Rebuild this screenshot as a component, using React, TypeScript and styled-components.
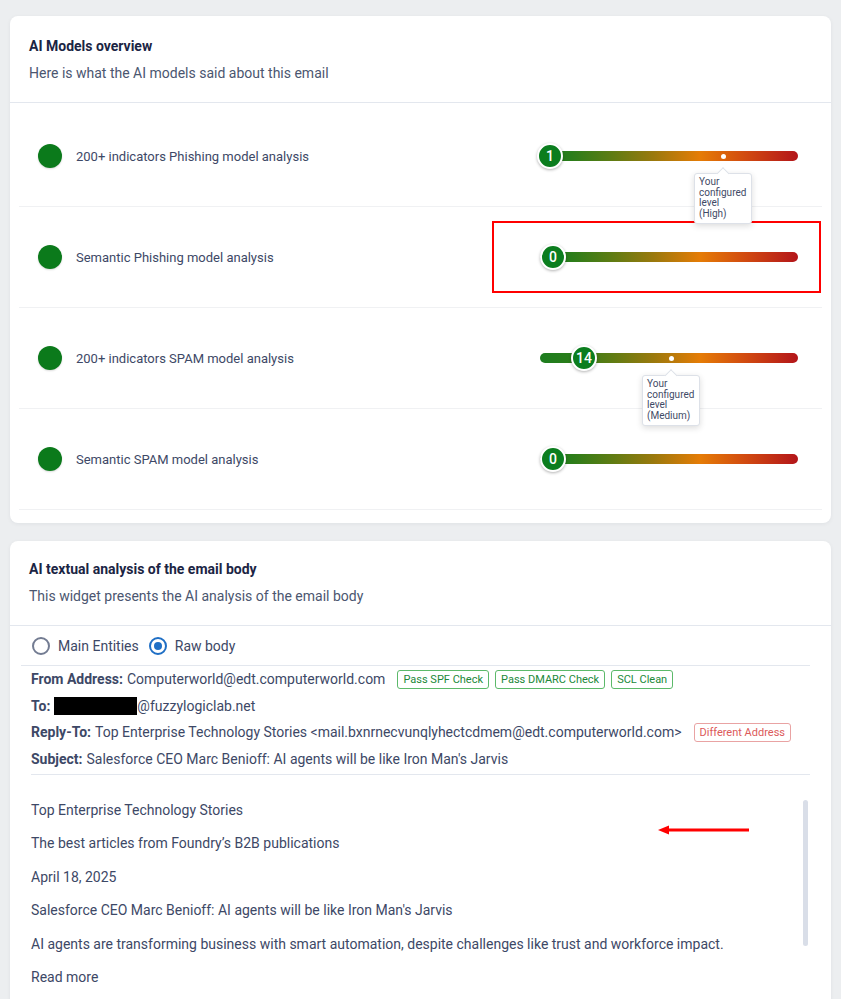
import React from "react";
import styled, { createGlobalStyle } from "styled-components";

const GlobalStyle = createGlobalStyle`
  html, body { margin: 0; padding: 0; }
  body {
    background: #eceef0;
    font-family: Roboto, "Liberation Sans", Arial, sans-serif;
    -webkit-font-smoothing: antialiased;
  }
`;

const Page = styled.div`
  padding: 16px 10px 0;
  display: flex;
  flex-direction: column;
  gap: 18px;
`;

const Card = styled.section`
  background: #ffffff;
  border-radius: 8px;
  box-shadow: 0 1px 4px rgba(20, 30, 50, 0.06);
`;

const CardHeader = styled.header<{ $padTop?: number }>`
  padding: ${(p) => p.$padTop ?? 20}px 19px 19px;
  border-bottom: 1px solid #e3e7ee;
`;

const Title = styled.h2`
  margin: 0;
  font-size: 14px;
  font-weight: 700;
  line-height: 20px;
  color: #1b2544;
`;

const Subtitle = styled.p`
  margin: 7px 0 0;
  font-size: 14px;
  line-height: 20px;
  color: #4b5670;
`;

const ModelList = styled.div`
  padding: 3px 9px 13px;
`;

const ModelRow = styled.div`
  position: relative;
  height: 100px;
  display: flex;
  align-items: center;
  padding: 0 24px 0 19px;
  border-bottom: 1px solid #f0f1f3;
`;

const StatusDot = styled.span`
  flex: none;
  width: 24px;
  height: 24px;
  border-radius: 50%;
  background: #0b7a1b;
  box-shadow: 0 1px 2px rgba(0, 0, 0, 0.15);
`;

const ModelName = styled.span`
  flex: 1;
  margin-left: 14px;
  font-size: 13px;
  color: #3d4866;
`;

const Track = styled.div`
  position: relative;
  flex: none;
  width: 258px;
  height: 10px;
  border-radius: 5px;
  background: linear-gradient(
    to right,
    #1d7d1f 0%,
    #2a7d1a 12%,
    #5f7c13 28%,
    #9a790d 44%,
    #e57c06 62%,
    #d24c10 79%,
    #b3151a 100%
  );
`;

const Thumb = styled.span`
  position: absolute;
  top: 50%;
  width: 26px;
  height: 26px;
  transform: translate(-50%, -50%);
  border-radius: 50%;
  background: #0b7d1e;
  border: 2px solid #ffffff;
  box-sizing: border-box;
  box-shadow: 0 1px 3px rgba(0, 0, 0, 0.3);
  display: flex;
  align-items: center;
  justify-content: center;
  color: #ffffff;
  font-size: 14px;
  font-weight: 500;
  z-index: 1;
`;

const LevelMarker = styled.span`
  position: absolute;
  top: 50%;
  width: 0;
  height: 0;
`;

const LevelDot = styled.span`
  position: absolute;
  left: -2.5px;
  top: -2.5px;
  width: 5px;
  height: 5px;
  border-radius: 50%;
  background: #ffffff;
`;

const Tooltip = styled.div`
  position: absolute;
  top: 17px;
  left: -29px;
  width: 58px;
  box-sizing: border-box;
  padding: 3px 4px 3px;
  background: #ffffff;
  border: 1px solid #dde1e8;
  border-radius: 3px;
  box-shadow: 0 2px 6px rgba(0, 0, 0, 0.14);
  font-size: 10px;
  line-height: 10.7px;
  color: #3f4b66;
  z-index: 3;

  &::before {
    content: "";
    position: absolute;
    top: -5px;
    left: 50%;
    width: 8px;
    height: 8px;
    background: #ffffff;
    border-left: 1px solid #dde1e8;
    border-top: 1px solid #dde1e8;
    transform: translateX(-50%) rotate(45deg);
  }
`;

const TipLine = styled.span`
  display: block;
`;

const Annotation = styled.div`
  position: absolute;
  left: 473px;
  top: 14px;
  width: 329px;
  height: 72px;
  box-sizing: border-box;
  border: 2px solid #ff0000;
  pointer-events: none;
`;

const EntitySection = styled.div`
  margin: 0 21px 0 11px;
`;

const RadioGroup = styled.div`
  display: flex;
  align-items: center;
  height: 39px;
  padding-left: 11px;
  border-bottom: 1px solid #e3e7ee;
`;

const RadioLabel = styled.label`
  display: flex;
  align-items: center;
  gap: 8px;
  margin-right: 10px;
  font-size: 14px;
  color: #3d4866;
`;

const RadioCircle = styled.span<{ $checked?: boolean }>`
  width: 18px;
  height: 18px;
  box-sizing: border-box;
  border-radius: 50%;
  border: 2px solid ${(p) => (p.$checked ? "#1f6fc5" : "#737c92")};
  display: flex;
  align-items: center;
  justify-content: center;

  &::after {
    content: "";
    width: 8px;
    height: 8px;
    border-radius: 50%;
    background: ${(p) => (p.$checked ? "#1f6fc5" : "transparent")};
  }
`;

const Headers = styled.div`
  margin-left: 10px;
  padding-bottom: 2px;
  border-bottom: 1px solid #e3e7ee;
`;

const HeaderLine = styled.div`
  display: flex;
  align-items: center;
  height: 26.5px;
  font-size: 14px;
  color: #3d4866;
  white-space: nowrap;
`;

const HeaderKey = styled.strong`
  font-weight: 700;
  margin-right: 4px;
`;

const Redacted = styled.span`
  display: inline-block;
  width: 83px;
  height: 18px;
  background: #000000;
`;

const Badge = styled.span<{ $tone: "ok" | "bad"; $gap?: number }>`
  display: inline-flex;
  align-items: center;
  height: 19px;
  box-sizing: border-box;
  padding: 0 5px;
  margin-left: ${(p) => p.$gap ?? 6}px;
  border: 1px solid ${(p) => (p.$tone === "ok" ? "#5cb96a" : "#e9a3a3")};
  border-radius: 3px;
  font-size: 11px;
  color: ${(p) => (p.$tone === "ok" ? "#218838" : "#dc5a5a")};
`;

const Body = styled.div`
  position: relative;
  margin-left: 10px;
  padding: 25px 0 40px;
  display: flex;
  flex-direction: column;
  gap: 13.4px;
`;

const BodyLine = styled.p`
  margin: 0;
  font-size: 14px;
  line-height: 20px;
  color: #3d4866;
`;

const ScrollThumb = styled.span`
  position: absolute;
  right: 2px;
  top: 25px;
  width: 5px;
  height: 146px;
  border-radius: 3px;
  background: #d9dee8;
`;

const ArrowMark = styled.svg`
  position: absolute;
  left: 627px;
  top: 50px;
`;

type Model = {
  name: string;
  value: number;
  thumbX: number;
  level?: { x: number; label: string };
  annotated?: boolean;
};

const models: Model[] = [
  {
    name: "200+ indicators Phishing model analysis",
    value: 1,
    thumbX: 10,
    level: { x: 183, label: "(High)" },
  },
  { name: "Semantic Phishing model analysis", value: 0, thumbX: 13, annotated: true },
  {
    name: "200+ indicators SPAM model analysis",
    value: 14,
    thumbX: 44,
    level: { x: 131, label: "(Medium)" },
  },
  { name: "Semantic SPAM model analysis", value: 0, thumbX: 13 },
];

const bodyLines = [
  "Top Enterprise Technology Stories",
  "The best articles from Foundry\u2019s B2B publications",
  "April 18, 2025",
  "Salesforce CEO Marc Benioff: AI agents will be like Iron Man's Jarvis",
  "AI agents are transforming business with smart automation, despite challenges like trust and workforce impact.",
  "Read more",
];

export default function App() {
  return (
    <>
      <GlobalStyle />
      <Page>
        <Card>
          <CardHeader>
            <Title>AI Models overview</Title>
            <Subtitle>Here is what the AI models said about this email</Subtitle>
          </CardHeader>
          <ModelList>
            {models.map((m) => (
              <ModelRow key={m.name}>
                <StatusDot />
                <ModelName>{m.name}</ModelName>
                <Track>
                  <Thumb style={{ left: m.thumbX }}>{m.value}</Thumb>
                  {m.level && (
                    <LevelMarker style={{ left: m.level.x }}>
                      <LevelDot />
                      <Tooltip>
                        <TipLine>Your</TipLine>
                        <TipLine>configured</TipLine>
                        <TipLine>level</TipLine>
                        <TipLine>{m.level.label}</TipLine>
                      </Tooltip>
                    </LevelMarker>
                  )}
                </Track>
                {m.annotated && <Annotation />}
              </ModelRow>
            ))}
          </ModelList>
        </Card>

        <Card>
          <CardHeader $padTop={18}>
            <Title>AI textual analysis of the email body</Title>
            <Subtitle>This widget presents the AI analysis of the email body</Subtitle>
          </CardHeader>
          <EntitySection>
            <RadioGroup>
              <RadioLabel>
                <RadioCircle />
                Main Entities
              </RadioLabel>
              <RadioLabel>
                <RadioCircle $checked />
                Raw body
              </RadioLabel>
            </RadioGroup>
            <Headers>
              <HeaderLine>
                <HeaderKey>From Address:</HeaderKey>
                Computerworld@edt.computerworld.com
                <Badge $tone="ok" $gap={12}>Pass SPF Check</Badge>
                <Badge $tone="ok">Pass DMARC Check</Badge>
                <Badge $tone="ok">SCL Clean</Badge>
              </HeaderLine>
              <HeaderLine>
                <HeaderKey>To:</HeaderKey>
                <Redacted />
                @fuzzylogiclab.net
              </HeaderLine>
              <HeaderLine>
                <HeaderKey>Reply-To:</HeaderKey>
                Top Enterprise Technology Stories
                &lt;mail.bxnrnecvunqlyhectcdmem@edt.computerworld.com&gt;
                <Badge $tone="bad" $gap={12}>Different Address</Badge>
              </HeaderLine>
              <HeaderLine>
                <HeaderKey>Subject:</HeaderKey>
                Salesforce CEO Marc Benioff: AI agents will be like Iron Man's Jarvis
              </HeaderLine>
            </Headers>
            <Body>
              {bodyLines.map((l) => (
                <BodyLine key={l}>{l}</BodyLine>
              ))}
              <ScrollThumb />
              <ArrowMark width="92" height="10" viewBox="0 0 92 10">
                <line x1="8" y1="5" x2="91" y2="5" stroke="#ff0000" strokeWidth="3" />
                <polygon points="0,5 11,0.5 11,9.5" fill="#ff0000" />
              </ArrowMark>
            </Body>
          </EntitySection>
        </Card>
      </Page>
    </>
  );
}
